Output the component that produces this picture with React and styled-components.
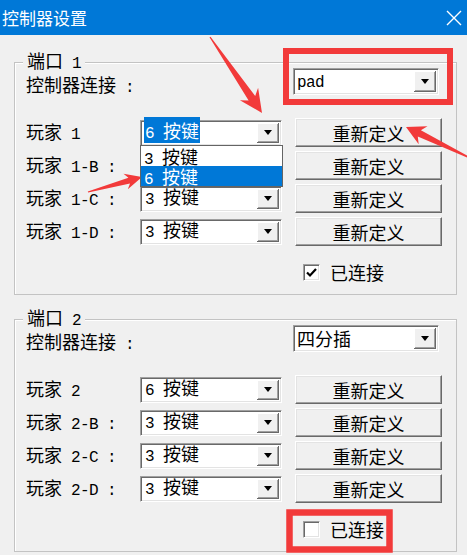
import React from 'react'
import styled, { createGlobalStyle } from 'styled-components'

const RED = '#f23a3a'

const GlobalStyle = createGlobalStyle`
  * { box-sizing: border-box; }
  body {
    margin: 0;
    background: #f0f0f0;
    overflow: hidden;
    font-family: "Noto Sans CJK SC", sans-serif;
  }
`

const Window = styled.div`
  position: relative;
  width: 467px;
  height: 555px;
  background: #f0f0f0;
  overflow: hidden;
`

const TitleBar = styled.div`
  height: 35px;
  background: #0078d7;
  color: #fff;
  display: flex;
  align-items: center;
  justify-content: space-between;
  padding: 0 5px 0 2px;
`

const Title = styled.span`
  font-size: 17px;
  line-height: 20px;
`

const Body = styled.div`
  padding: 0 0 0 14px;
`

const Group = styled.div`
  position: relative;
  width: 443px;
  margin-top: ${p => p.$top}px;
  border: 1px solid #c3c3c3;
  box-shadow: inset 1px 1px 0 #fff;
  padding: 5px 14px 12px 11px;
`

const Legend = styled.div`
  position: absolute;
  top: -13px;
  left: 8px;
  padding: 0 4px 0 4px;
  background: #f0f0f0;
  font-size: 18px;
  line-height: 20px;
`

const Lat = styled.span`
  font-family: "Liberation Mono", monospace;
  font-size: 16px;
  letter-spacing: -0.6px;
  white-space: pre;
`

const ConnectRow = styled.div`
  display: flex;
  align-items: flex-end;
  justify-content: space-between;
  height: 27px;
`

const Label = styled.span`
  font-size: 18px;
  line-height: 20px;
  white-space: pre;
`

const ConnectLabel = styled(Label)`
  position: relative;
  top: 3px;
`

const Rows = styled.div`
  display: grid;
  grid-template-columns: 114px 155px 147px;
  row-gap: 4px;
  grid-auto-rows: 29px;
  align-items: center;
  margin-top: 23px;
`

const Sunken = styled.div`
  position: relative;
  display: flex;
  align-items: center;
  height: ${p => p.$h || 26}px;
  width: ${p => p.$w || 142}px;
  background: #fff;
  border-top: 1px solid #a0a0a0;
  border-left: 1px solid #a0a0a0;
  border-right: 1px solid #fff;
  border-bottom: 1px solid #fff;
  box-shadow: inset 1px 1px 0 #696969, inset -1px -1px 0 #e3e3e3;
  padding: 2px 2px 2px 3px;
`

const Value = styled.span`
  flex: 1;
  font-size: 18px;
  line-height: 19px;
  white-space: pre;
`

const Picked = styled.span`
  background: ${p => (p.$on ? '#0078d7' : 'transparent')};
  color: ${p => (p.$on ? '#fff' : '#000')};
  padding: 0 1px;
`

const DropBtn = styled.div`
  width: 22px;
  height: 100%;
  display: flex;
  align-items: center;
  justify-content: center;
  background: #f0f0f0;
  box-shadow: inset -1px -1px 0 #696969, inset 1px 1px 0 #fff, inset -2px -2px 0 #a0a0a0;
  &::after {
    content: '';
    border-left: 4.5px solid transparent;
    border-right: 4.5px solid transparent;
    border-top: 5px solid #000;
  }
`

const List = styled.div`
  position: absolute;
  top: 100%;
  left: -1px;
  width: 143px;
  background: #fff;
  border: 1px solid #646464;
  z-index: 2;
`

const Item = styled.div`
  height: 20px;
  padding-left: 3px;
  font-size: 18px;
  line-height: 20px;
  background: ${p => (p.$on ? '#0078d7' : '#fff')};
  color: ${p => (p.$on ? '#fff' : '#000')};
  white-space: pre;
`

const Button = styled.div`
  height: 29px;
  display: flex;
  align-items: center;
  justify-content: center;
  background: #f0f0f0;
  border-top: 1px solid #fff;
  border-left: 1px solid #fff;
  border-right: 1px solid #696969;
  border-bottom: 1px solid #696969;
  box-shadow: inset -1px -1px 0 #a0a0a0, inset 1px 1px 0 #e3e3e3;
  font-size: 18px;
  line-height: 20px;
`

const CheckRow = styled.div`
  display: flex;
  align-items: center;
  gap: 10px;
  height: 20px;
  margin: 16px 0 0 277px;
`

const Box = styled.div`
  width: 17px;
  height: 17px;
  background: #fff;
  border-top: 1px solid #a0a0a0;
  border-left: 1px solid #a0a0a0;
  border-right: 1px solid #fff;
  border-bottom: 1px solid #fff;
  box-shadow: inset 1px 1px 0 #696969, inset -1px -1px 0 #e3e3e3;
  display: flex;
  align-items: center;
  justify-content: center;
`

const Overlay = styled.svg`
  position: absolute;
  top: 0;
  left: 0;
  pointer-events: none;
`

const Combo = ({ children }) => (
  <Sunken $w={146} $h={27} style={{ marginRight: 3 }}>
    <Value>{children}</Value>
    <DropBtn />
  </Sunken>
)

const Select = ({ value, focused, list }) => (
  <Sunken>
    <Value>
      <Picked $on={focused}>{value}</Picked>
    </Value>
    <DropBtn />
    {list && (
      <List>
        {list.map((v, i) => (
          <Item key={i} $on={i === 1}>{v}</Item>
        ))}
      </List>
    )}
  </Sunken>
)

const Keys = ({ n }) => (
  <>
    <Lat>{n} </Lat>按键
  </>
)

const Port = ({ num, top, combo, players, checked }) => (
  <Group $top={top}>
    <Legend>
      端口<Lat> {num}</Lat>
    </Legend>
    <ConnectRow>
      <ConnectLabel>
        控制器连接<Lat> :</Lat>
      </ConnectLabel>
      <Combo>{combo}</Combo>
    </ConnectRow>
    <Rows>
      {players.map(p => (
        <React.Fragment key={p.id}>
          <Label>
            玩家<Lat> {p.id}{p.colon ? ' :' : ''}</Lat>
          </Label>
          <Select
            value={<Keys n={p.keys} />}
            focused={p.focused}
            list={p.list && [<Keys n={3} key="a" />, <Keys n={6} key="b" />]}
          />
          <Button>重新定义</Button>
        </React.Fragment>
      ))}
    </Rows>
    <CheckRow>
      <Box>
        {checked && (
          <svg width="13" height="13" viewBox="0 0 13 13">
            <polyline points="2,6.5 5,9.5 11,3" fill="none" stroke="#000" strokeWidth="2.2" />
          </svg>
        )}
      </Box>
      <Label>已连接</Label>
    </CheckRow>
  </Group>
)

function arrow([x1, y1], [x2, y2], headLen, headHalf, tailHalf, neckHalf) {
  const L = Math.hypot(x2 - x1, y2 - y1)
  const ux = (x2 - x1) / L
  const uy = (y2 - y1) / L
  const px = -uy
  const py = ux
  const bx = x2 - ux * headLen
  const by = y2 - uy * headLen
  const nx = x2 - ux * headLen * 0.78
  const ny = y2 - uy * headLen * 0.78
  const pts = [
    [x1 + px * tailHalf, y1 + py * tailHalf],
    [nx + px * neckHalf, ny + py * neckHalf],
    [bx + px * headHalf, by + py * headHalf],
    [x2, y2],
    [bx - px * headHalf, by - py * headHalf],
    [nx - px * neckHalf, ny - py * neckHalf],
    [x1 - px * tailHalf, y1 - py * tailHalf],
  ]
  return pts.map(p => p.map(v => v.toFixed(1)).join(',')).join(' ')
}

const port1 = [
  { id: '1', keys: 6, focused: true, list: true },
  { id: '1-B', keys: 3, colon: true },
  { id: '1-C', keys: 3, colon: true },
  { id: '1-D', keys: 3, colon: true },
]

const port2 = [
  { id: '2', keys: 6 },
  { id: '2-B', keys: 3, colon: true },
  { id: '2-C', keys: 3, colon: true },
  { id: '2-D', keys: 3, colon: true },
]

export default function App() {
  return (
    <Window>
      <GlobalStyle />
      <TitleBar>
        <Title>控制器设置</Title>
        <svg width="16" height="16" viewBox="0 0 16 16">
          <path d="M1 1 L15 15 M15 1 L1 15" stroke="#fff" strokeWidth="1.4" />
        </svg>
      </TitleBar>
      <Body>
        <Port num="1" top={27} combo={<Lat style={{ fontSize: 16 }}>pad</Lat>} players={port1} checked />
        <Port num="2" top={24} combo="四分插" players={port2} />
      </Body>
      <Overlay width="467" height="555">
        <rect x="286" y="51" width="164" height="51" fill="none" stroke={RED} strokeWidth="6" />
        <rect x="289.5" y="512.5" width="100" height="37" fill="none" stroke={RED} strokeWidth="6.5" />
        <polygon points={arrow([210, 37], [262, 113], 23, 11, 0.6, 4)} fill={RED} />
        <polygon points={arrow([88, 192], [142, 177], 17, 8, 0.6, 3)} fill={RED} />
        <polygon points={arrow([470, 158], [406, 127], 19, 10, 0.8, 3.5)} fill={RED} />
      </Overlay>
    </Window>
  )
}
